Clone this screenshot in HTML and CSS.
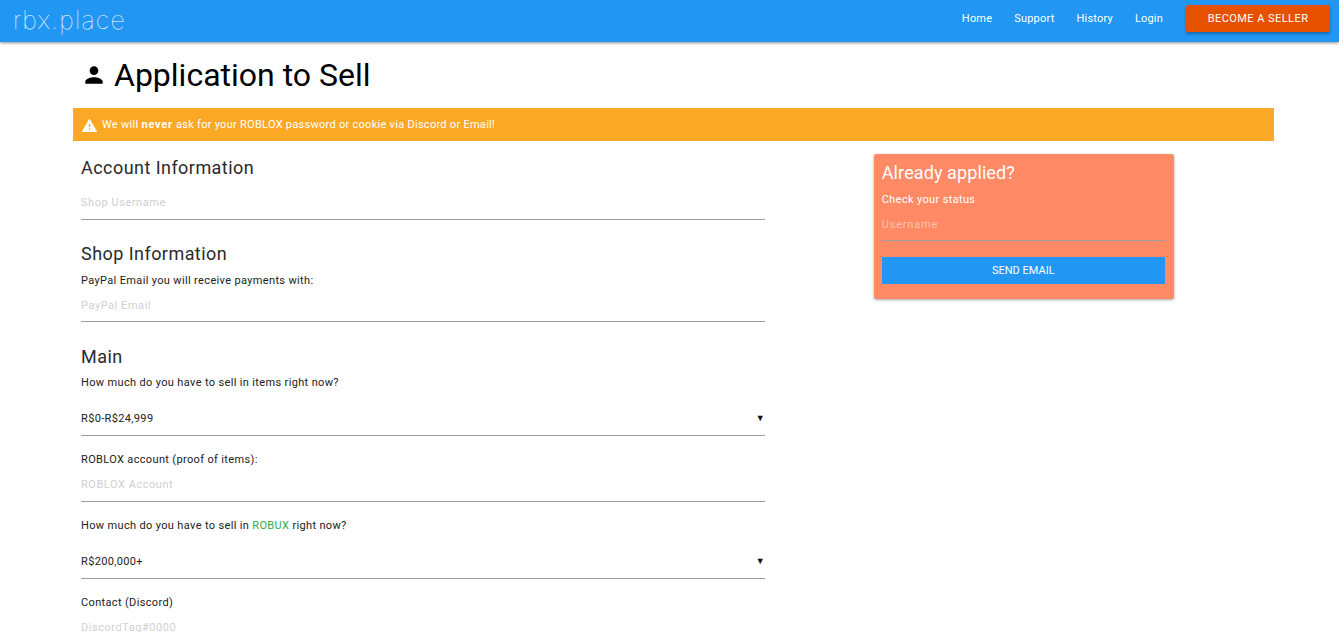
FILE: index.html
```html
<!DOCTYPE html>
<html lang="en">
<head>
<meta charset="utf-8">
<title>Application to Sell</title>
<link rel="stylesheet" href="styles.css">
</head>
<body>
<header class="navbar">
  <a class="logo" href="#">rbx.place</a>
  <nav class="nav-links">
    <a href="#">Home</a>
    <a href="#">Support</a>
    <a href="#">History</a>
    <a href="#">Login</a>
  </nav>
  <a class="btn-seller" href="#">BECOME A SELLER</a>
</header>
<main class="container">
  <h1 class="page-title">
    <svg class="title-icon" viewBox="0 0 24 24"><path d="M12 12c2.21 0 4-1.79 4-4s-1.79-4-4-4-4 1.79-4 4 1.79 4 4 4zm0 2c-2.67 0-8 1.34-8 4v2h16v-2c0-2.66-5.33-4-8-4z"/></svg>
    <span>Application to Sell</span>
  </h1>
  <div class="alert">
    <svg class="alert-icon" viewBox="0 0 24 24"><path d="M1 21h22L12 2 1 21zm12-3h-2v-2h2v2zm0-4h-2v-4h2v4z"/></svg>
    <span>We will <b>never</b> ask for your ROBLOX password or cookie via Discord or Email!</span>
  </div>
  <div class="columns">
    <form class="form-col">
      <h2 class="section first">Account Information</h2>
      <input class="field first-field" type="text" placeholder="Shop Username">

      <h2 class="section sec-shop">Shop Information</h2>
      <label class="label label-shop">PayPal Email you will receive payments with:</label>
      <input class="field" type="text" placeholder="PayPal Email">

      <h2 class="section sec-main">Main</h2>
      <label class="label label-main">How much do you have to sell in items right now?</label>
      <div class="select">
        <span>R$0-R$24,999</span><span class="arrow">▼</span>
      </div>

      <label class="label label-next">ROBLOX account (proof of items):</label>
      <input class="field field-tall" type="text" placeholder="ROBLOX Account">

      <label class="label label-next">How much do you have to sell in <span class="green">ROBUX</span> right now?</label>
      <div class="select">
        <span>R$200,000+</span><span class="arrow">▼</span>
      </div>

      <label class="label label-next">Contact (Discord)</label>
      <input class="field field-tall" type="text" placeholder="DiscordTag#0000">
    </form>
    <aside class="side-col">
      <div class="card">
        <h3 class="card-title">Already applied?</h3>
        <p class="card-text">Check your status</p>
        <input class="card-field" type="text" placeholder="Username">
        <button class="card-btn" type="button">SEND EMAIL</button>
      </div>
    </aside>
  </div>
</main>
</body>
</html>
```
FILE: styles.css
```css
* { box-sizing: border-box; }
html, body { margin: 0; padding: 0; height: 632px; overflow: hidden; }
body {
  font-family: Roboto, "Liberation Sans", sans-serif;
  font-size: 11px;
  font-weight: 400;
  letter-spacing: 0.35px;
  color: #212121;
  background: #fff;
}
a { color: inherit; text-decoration: none; }

.navbar {
  height: 42px;
  background: #2196f3;
  box-shadow: 0 1px 3px rgba(0,0,0,.45);
  display: flex;
  align-items: center;
  padding: 0 9px 5px 13px;
  color: #fff;
  position: relative;
}
.logo {
  font-family: Inter, sans-serif;
  font-weight: 100;
  font-size: 25px;
  letter-spacing: 1.2px;
  line-height: 36px;
  margin-top: 3px;
}
.nav-links {
  margin-left: auto;
  display: flex;
  gap: 22px;
  margin-right: 23px;
  letter-spacing: 0.2px;
}
.btn-seller {
  width: 144px;
  height: 27px;
  background: #e65100;
  border-radius: 2px;
  box-shadow: 0 2px 3px rgba(0,0,0,.3);
  display: flex;
  align-items: center;
  justify-content: center;
  letter-spacing: 0.45px;
}

.container { margin: 0 65px 0 73px; }
.page-title {
  margin: 0;
  height: 66px;
  padding-left: 8px;
  display: flex;
  align-items: center;
  gap: 7px;
  font-weight: 400;
  font-size: 32px;
  letter-spacing: 0;
  color: #000;
}
.title-icon { width: 26px; height: 26px; fill: #000; flex: none; margin-top: -1px; }

.alert {
  height: 33px;
  background: #faa826;
  color: #fff;
  display: flex;
  align-items: center;
  gap: 4px;
  padding-left: 8px;
  letter-spacing: 0.28px;
}
.alert b { letter-spacing: 0.8px; font-weight: 700; }
.alert-icon { width: 17px; height: 17px; fill: #fff; flex: none; margin-top: 1px; }

.columns { display: grid; grid-template-columns: 7fr 5fr; }
.form-col { padding: 0 9px 0 8px; display: flex; flex-direction: column; }
.side-col { display: flex; justify-content: center; padding-top: 13px; align-items: flex-start; }

.section {
  margin: 0;
  font-weight: 400;
  font-size: 18px;
  letter-spacing: 0.45px;
  line-height: 24px;
  color: #2a2a2a;
}
.section.first { margin-top: 15px; }
.sec-shop { margin-top: 22px; }
.sec-main { margin-top: 23px; }

.label { display: block; line-height: 16px; }
.label-shop { margin-top: 7px; }
.label-main { margin-top: 6px; }
.label-next { margin-top: 16px; }
.green { color: #2ead47; }

.field {
  display: block;
  width: 100%;
  height: 33px;
  padding: 1px 0 1px;
  border: 0;
  border-bottom: 1px solid #9e9e9e;
  outline: 0;
  font: inherit;
  letter-spacing: 0.55px;
  background: transparent;
}
.field-tall { height: 34px; }
.first-field { height: 40px; padding-top: 7px; }
.field::placeholder { color: #cfcfcf; opacity: 1; }

.select {
  height: 45px;
  padding: 10px 0 0;
  border-bottom: 1px solid #9e9e9e;
  display: flex;
  align-items: center;
  justify-content: space-between;
}
.arrow { font-size: 9px; color: #111; letter-spacing: 0; }

.card {
  width: 300px;
  height: 145px;
  background: #ff8a65;
  border-radius: 2px;
  box-shadow: 0 1px 3px rgba(0,0,0,.35);
  padding: 7px 9px 0 8px;
  color: #fff;
}
.card-title { margin: 0; font-weight: 400; font-size: 18px; letter-spacing: 0.1px; line-height: 24px; }
.card-text { margin: 7px 0 0; line-height: 16px; }
.card-field {
  display: block;
  width: 100%;
  height: 33px;
  padding: 1px 0 1px;
  border: 0;
  border-bottom: 1px solid #9e9e9e;
  outline: 0;
  font: inherit;
  letter-spacing: 0.8px;
  background: transparent;
  color: #fff;
}
.card-field::placeholder { color: #ffc2ae; opacity: 1; }
.card-btn {
  display: block;
  width: 100%;
  height: 27px;
  margin-top: 16px;
  border: 0;
  border-radius: 1px;
  background: #2196f3;
  color: #fff;
  font: inherit;
  letter-spacing: 0;
}
```
